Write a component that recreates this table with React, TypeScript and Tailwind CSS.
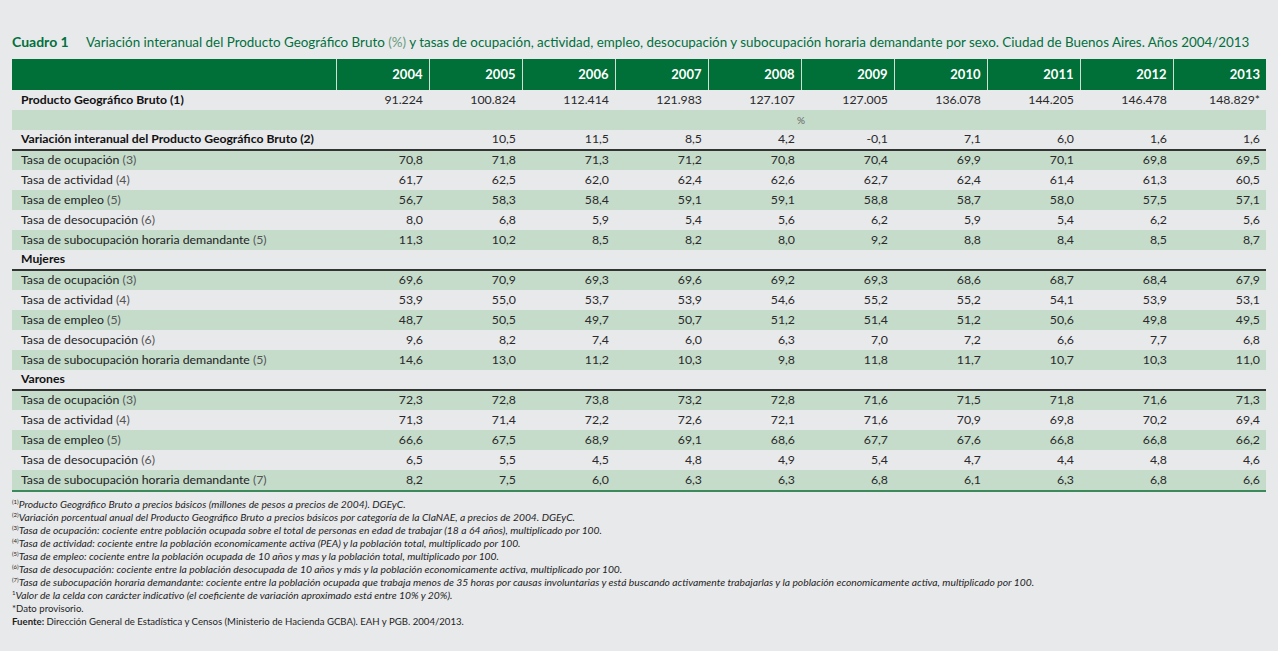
import React from "react";

const years = ["2004", "2005", "2006", "2007", "2008", "2009", "2010", "2011", "2012", "2013"];

const pgb = ["91.224", "100.824", "112.414", "121.983", "127.107", "127.005", "136.078", "144.205", "146.478", "148.829*"];
const variacion = ["", "10,5", "11,5", "8,5", "4,2", "-0,1", "7,1", "6,0", "1,6", "1,6"];

const total: [string, string, string[]][] = [
  ["Tasa de ocupación", "(3)", ["70,8", "71,8", "71,3", "71,2", "70,8", "70,4", "69,9", "70,1", "69,8", "69,5"]],
  ["Tasa de actividad", "(4)", ["61,7", "62,5", "62,0", "62,4", "62,6", "62,7", "62,4", "61,4", "61,3", "60,5"]],
  ["Tasa de empleo", "(5)", ["56,7", "58,3", "58,4", "59,1", "59,1", "58,8", "58,7", "58,0", "57,5", "57,1"]],
  ["Tasa de desocupación", "(6)", ["8,0", "6,8", "5,9", "5,4", "5,6", "6,2", "5,9", "5,4", "6,2", "5,6"]],
  ["Tasa de subocupación horaria demandante", "(5)", ["11,3", "10,2", "8,5", "8,2", "8,0", "9,2", "8,8", "8,4", "8,5", "8,7"]],
];
const mujeres: [string, string, string[]][] = [
  ["Tasa de ocupación", "(3)", ["69,6", "70,9", "69,3", "69,6", "69,2", "69,3", "68,6", "68,7", "68,4", "67,9"]],
  ["Tasa de actividad", "(4)", ["53,9", "55,0", "53,7", "53,9", "54,6", "55,2", "55,2", "54,1", "53,9", "53,1"]],
  ["Tasa de empleo", "(5)", ["48,7", "50,5", "49,7", "50,7", "51,2", "51,4", "51,2", "50,6", "49,8", "49,5"]],
  ["Tasa de desocupación", "(6)", ["9,6", "8,2", "7,4", "6,0", "6,3", "7,0", "7,2", "6,6", "7,7", "6,8"]],
  ["Tasa de subocupación horaria demandante", "(5)", ["14,6", "13,0", "11,2", "10,3", "9,8", "11,8", "11,7", "10,7", "10,3", "11,0"]],
];
const varones: [string, string, string[]][] = [
  ["Tasa de ocupación", "(3)", ["72,3", "72,8", "73,8", "73,2", "72,8", "71,6", "71,5", "71,8", "71,6", "71,3"]],
  ["Tasa de actividad", "(4)", ["71,3", "71,4", "72,2", "72,6", "72,1", "71,6", "70,9", "69,8", "70,2", "69,4"]],
  ["Tasa de empleo", "(5)", ["66,6", "67,5", "68,9", "69,1", "68,6", "67,7", "67,6", "66,8", "66,8", "66,2"]],
  ["Tasa de desocupación", "(6)", ["6,5", "5,5", "4,5", "4,8", "4,9", "5,4", "4,7", "4,4", "4,8", "4,6"]],
  ["Tasa de subocupación horaria demandante", "(7)", ["8,2", "7,5", "6,0", "6,3", "6,3", "6,8", "6,1", "6,3", "6,8", "6,6"]],
];

function DataRows({ rows }: { rows: [string, string, string[]][] }) {
  return (
    <>
      {rows.map(([label, note, vals], i) => (
        <tr key={label + i} className={i % 2 === 0 ? "bg-[#c5dccb] h-[20px]" : "h-[20px]"}>
          <td className="pl-[9px] text-[12.3px] text-[#1e1e1e] whitespace-nowrap">
            {label} <span className="text-[#555]">{note}</span>
          </td>
          {vals.map((v, j) => (
            <td key={j} className="pr-[6px] text-right text-[12.3px] text-[#2a2a2a]">
              {v}
            </td>
          ))}
        </tr>
      ))}
    </>
  );
}

function SectionRow({ label, note, values, dark }: { label: string; note?: string; values?: string[]; dark?: boolean }) {
  return (
    <tr className={dark ? "h-[20px] border-b-[2px] border-[#333]" : "h-[20px]"}>
      <td className="pl-[9px] text-[12.2px] font-bold text-[#111] whitespace-nowrap">
        {label} {note && <span>{note}</span>}
      </td>
      {values ? (
        values.map((v, j) => (
          <td key={j} className="pr-[6px] text-right text-[12.3px] text-[#2a2a2a]">
            {v}
          </td>
        ))
      ) : (
        <td colSpan={10}></td>
      )}
    </tr>
  );
}

const notes: [string, string][] = [
  ["(1)", "Producto Geográfico Bruto a precios básicos (millones de pesos a precios de 2004). DGEyC."],
  ["(2)", "Variación porcentual anual del Producto Geográfico Bruto a precios básicos por categoría de la ClaNAE, a precios de 2004. DGEyC."],
  ["(3)", "Tasa de ocupación: cociente entre población ocupada sobre el total de personas en edad de trabajar (18 a 64 años), multiplicado por 100."],
  ["(4)", "Tasa de actividad: cociente entre la población economicamente activa (PEA) y la población total, multiplicado por 100."],
  ["(5)", "Tasa de empleo: cociente entre la población ocupada de 10 años y mas y la población total, multiplicado por 100."],
  ["(6)", "Tasa de desocupación: cociente entre la población desocupada de 10 años y más y la población economicamente activa, multiplicado por 100."],
  ["(7)", "Tasa de subocupación horaria demandante: cociente entre la población ocupada que trabaja menos de 35 horas por causas involuntarias y está buscando activamente trabajarlas y la población economicamente activa, multiplicado por 100."],
  ["1", "Valor de la celda con carácter indicativo (el coeficiente de variación aproximado está entre 10% y 20%)."],
];

export default function App() {
  return (
    <div className="w-[1278px] h-[651px] bg-[#e8e9eb] overflow-hidden" style={{ fontFamily: "Lato, 'Open Sans', sans-serif" }}>
      <div className="pt-[33px] pl-[12px] h-[59px] flex items-start text-[13.4px] leading-[18px] text-[#00703c] whitespace-nowrap">
        <span className="inline-block font-bold text-[14px] w-[74px] shrink-0">Cuadro 1</span>
        <span>
          Variación interanual del Producto Geográfico Bruto <span className="text-[#6a9c7e]">(%)</span> y tasas de ocupación, actividad, empleo, desocupación y subocupación horaria demandante por sexo. Ciudad de Buenos Aires. Años 2004/2013
        </span>
      </div>
      <table className="ml-[12px] w-[1254px] table-fixed border-collapse">
        <colgroup>
          <col className="w-[324px]" />
          {years.map((y) => (
            <col key={y} className="w-[93px]" />
          ))}
        </colgroup>
        <thead>
          <tr className="bg-[#006f38] h-[31px]">
            <th className="border-r border-[#cfe0d5]"></th>
            {years.map((y, i) => (
              <th
                key={y}
                className={
                  i < 9
                    ? "pr-[6px] text-right text-[13px] font-bold text-white border-r border-[#cfe0d5]"
                    : "pr-[6px] text-right text-[13px] font-bold text-white"
                }
              >
                {y}
              </th>
            ))}
          </tr>
        </thead>
        <tbody>
          <SectionRow label="Producto Geográfico Bruto" note="(1)" values={pgb} />
          <tr className="bg-[#c5dccb] h-[20px]">
            <td></td>
            <td colSpan={10} className="text-center text-[10px] text-[#666]">%</td>
          </tr>
          <SectionRow label="Variación interanual del Producto Geográfico Bruto" note="(2)" values={variacion} dark />
          <DataRows rows={total} />
          <SectionRow label="Mujeres" dark />
          <DataRows rows={mujeres} />
          <SectionRow label="Varones" dark />
          <DataRows rows={varones} />
          <tr className="h-0 border-b-[2px] border-[#3c8a5c]">
            <td colSpan={11}></td>
          </tr>
        </tbody>
      </table>
      <div className="ml-[12px] mt-[6px] text-[#1e1e1e]">
        {notes.map(([n, t], i) => (
          <div key={i} className="text-[10.3px] leading-[13px] italic whitespace-nowrap">
            <span className="not-italic text-[6px] align-top leading-[8px]">{n}</span>
            {t}
          </div>
        ))}
        <div className="text-[9.6px] leading-[13px] whitespace-nowrap">*Dato provisorio.</div>
        <div className="text-[9.6px] leading-[13px] whitespace-nowrap">
          <span className="font-bold">Fuente:</span> Dirección General de Estadística y Censos (Ministerio de Hacienda GCBA). EAH y PGB. 2004/2013.
        </div>
      </div>
    </div>
  );
}
